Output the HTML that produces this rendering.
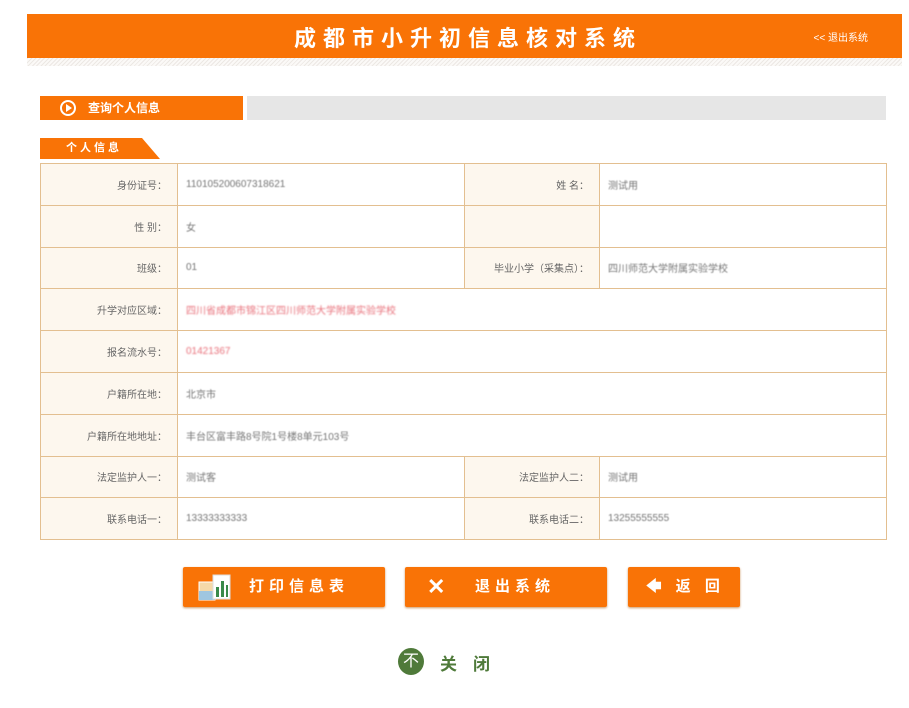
<!DOCTYPE html>
<html><head><meta charset="utf-8"><style>
*{margin:0;padding:0;box-sizing:border-box}
body{width:909px;height:708px;background:#fff;position:relative;font-family:"Liberation Sans","Noto Sans CJK SC",sans-serif;overflow:hidden}
.hdr{position:absolute;left:27px;top:14px;width:875px;height:44px;background:#f97306;color:#fff}
.hdr .t{position:absolute;left:7px;right:0;top:7px;text-align:center;font-size:22px;font-weight:bold;letter-spacing:7px}
.hdr .q{position:absolute;right:34px;top:15px;font-size:10px}
.stripe{position:absolute;left:27px;top:58px;width:875px;height:8px;background:repeating-linear-gradient(135deg,#ece8e4 0 1px,#fbf9f7 1px 3px)}
.sec{position:absolute;left:40px;top:96px;width:203px;height:24px;background:#f97306;color:#fff;font-size:12px;font-weight:bold;line-height:24px;padding-left:48px}
.sec .c{position:absolute;left:20px;top:4px;width:16px;height:16px;border:2px solid #fff;border-radius:50%}
.sec .c:after{content:"";position:absolute;left:4px;top:2px;border-left:6px solid #fff;border-top:4px solid transparent;border-bottom:4px solid transparent}
.gray{position:absolute;left:247px;top:96px;width:639px;height:24px;background:#e6e6e6}
.tab{position:absolute;left:40px;top:138px;width:120px;height:21px;background:#f97306;clip-path:polygon(0 0,85% 0,100% 100%,0 100%);color:#fff;font-size:11px;font-weight:bold;line-height:21px;padding-left:26px;letter-spacing:3px}
table{position:absolute;left:40px;top:163px;width:847px;height:377px;border-collapse:collapse}
td{border:1px solid #e3bf90;font-size:10px;color:#666;height:41.8px}
td.l{background:#fdf7ee;text-align:right;padding-right:10px;width:137px}
td.v{padding-left:8px;width:287px}
td.l2{width:135px}
.b{filter:blur(0.6px);color:#777}
.r{color:#e8707a;filter:blur(0.8px)}
.btn{position:absolute;top:567px;height:40px;background:#f97306;color:#fff;font-size:15px;font-weight:bold;letter-spacing:5px;line-height:40px;box-shadow:0 1px 2px #c96;border-radius:2px}
.close{position:absolute;left:398px;top:648px;width:26px;height:27px;border-radius:50%;background:#4f7a3a;color:#fff;text-align:center;font-size:16px;line-height:27px}
.ct{position:absolute;left:440px;top:650px;color:#4f7a3a;font-size:17px;font-weight:bold;letter-spacing:16px}
</style></head><body>
<div class="hdr"><div class="t">成都市小升初信息核对系统</div><div class="q">&lt;&lt; 退出系统</div></div>
<div class="stripe"></div>
<div class="sec"><span class="c"></span>查询个人信息</div><div class="gray"></div>
<div class="tab">个人信息</div>
<table>
<tr><td class="l">身份证号：</td><td class="v b">110105200607318621</td><td class="l l2">姓 名：</td><td class="v b">测试用</td></tr>
<tr><td class="l">性 别：</td><td class="v b">女</td><td class="l l2"></td><td class="v"></td></tr>
<tr><td class="l">班级：</td><td class="v b">01</td><td class="l l2">毕业小学（采集点）：</td><td class="v b">四川师范大学附属实验学校</td></tr>
<tr><td class="l">升学对应区域：</td><td class="v r" colspan="3">四川省成都市锦江区四川师范大学附属实验学校</td></tr>
<tr><td class="l">报名流水号：</td><td class="v r" colspan="3">01421367</td></tr>
<tr><td class="l">户籍所在地：</td><td class="v b" colspan="3">北京市</td></tr>
<tr><td class="l">户籍所在地地址：</td><td class="v b" colspan="3">丰台区富丰路8号院1号楼8单元103号</td></tr>
<tr><td class="l">法定监护人一：</td><td class="v b">测试客</td><td class="l l2">法定监护人二：</td><td class="v b">测试用</td></tr>
<tr><td class="l">联系电话一：</td><td class="v b">13333333333</td><td class="l l2">联系电话二：</td><td class="v b">13255555555</td></tr>
</table>
<div class="btn" style="left:183px;width:202px;padding-left:66px"><svg style="position:absolute;left:14px;top:6px" width="36" height="30"><rect x="2" y="9" width="16" height="18" fill="#f5d9a8" stroke="#fff"/><rect x="2" y="18" width="16" height="9" fill="#9fc6e0"/><rect x="16" y="2" width="17" height="24" fill="#fff" stroke="#ddd"/><rect x="19" y="14" width="3" height="10" fill="#3a8a4a"/><rect x="24" y="8" width="3" height="16" fill="#3a8a4a"/><rect x="29" y="12" width="2" height="12" fill="#3a8a4a"/></svg>打印信息表</div>
<div class="btn" style="left:405px;width:202px;padding-left:70px"><span style="position:absolute;left:22px;top:0;font-size:22px">✕</span>退出系统</div>
<div class="btn" style="left:628px;width:112px;padding-left:18px">🡄 返 回</div>
<div class="close">不</div><div class="ct">关闭</div>
</body></html>
